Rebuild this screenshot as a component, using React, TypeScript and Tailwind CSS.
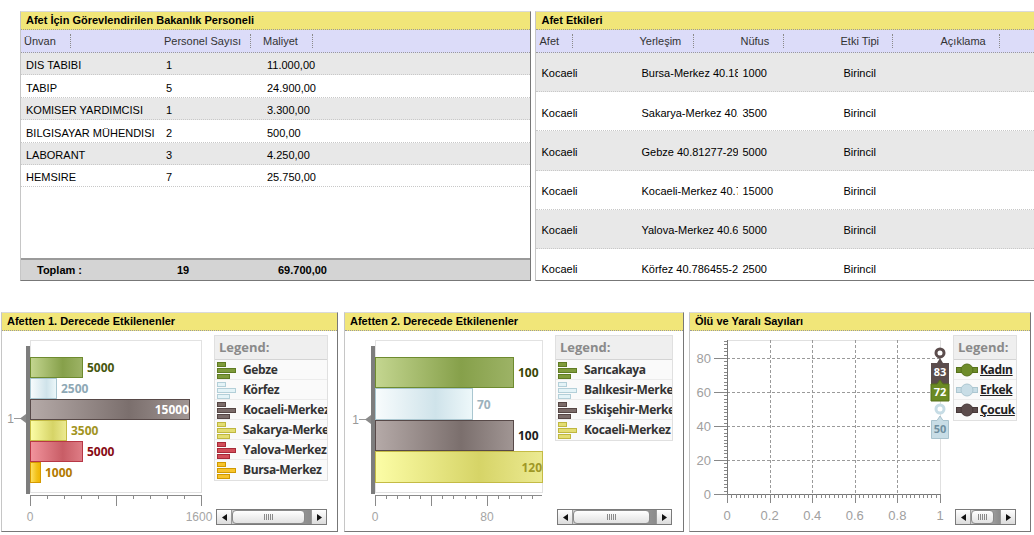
import React from 'react';

type Bar = {
  y: number;
  h: number;
  w: number;
  grad: string;
  stroke: string;
  label: string;
  color: string;
  inside?: boolean;
};

const GRADS: Record<string, string[]> = {
  green: ['#c4d690', '#86a04a', '#9db366'],
  blue: ['#f8fcfd', '#cfe3ea', '#eef8fa'],
  brown: ['#b5aaa8', '#7b6f6d', '#a19694'],
  yellow: ['#fcfda6', '#d6d467', '#ecea92'],
  red: ['#f2949d', '#c85d66', '#df7d86'],
  orange: ['#ffe264', '#f2c11a', '#efb400'],
};

const LEGEND_COLORS: Record<string, [string, string]> = {
  green: ['#7f9b3c', '#5f7b22'],
  blue: ['#e4f3f7', '#b3cfd8'],
  brown: ['#7b6c6a', '#554644'],
  yellow: ['#e3dd72', '#bfb73f'],
  red: ['#d24e5a', '#a72a37'],
  orange: ['#f7c42c', '#d09a00'],
};

function GradDefs({ prefix }: { prefix: string }) {
  return (
    <defs>
      {Object.entries(GRADS).map(([k, c]) => (
        <linearGradient key={k} id={`${prefix}-${k}`} x1="0" x2="1" y1="0" y2="0">
          <stop offset="0" stopColor={c[0]} />
          <stop offset="0.62" stopColor={c[1]} />
          <stop offset="1" stopColor={c[2]} />
        </linearGradient>
      ))}
    </defs>
  );
}

function TitleBar({ children }: { children: React.ReactNode }) {
  return (
    <div className="h-[18px] shrink-0 flex items-center pl-[5px] bg-[#f1e679] border-b border-dotted border-[#9a9a9a] text-[11px] font-bold text-black whitespace-nowrap">
      {children}
    </div>
  );
}

function HeadCell({ label, gap, className }: { label: string; gap: string; className: string }) {
  return (
    <div className={`flex items-center ${className}`}>
      <span>{label}</span>
      <span className={`inline-block h-[14px] border-l border-dotted border-[#8a8a8a] ${gap}`} />
    </div>
  );
}

const personnel = [
  ['DIS TABIBI', '1', '11.000,00'],
  ['TABIP', '5', '24.900,00'],
  ['KOMISER YARDIMCISI', '1', '3.300,00'],
  ['BILGISAYAR MÜHENDISI', '2', '500,00'],
  ['LABORANT', '3', '4.250,00'],
  ['HEMSIRE', '7', '25.750,00'],
];

function PersonnelTable() {
  return (
    <div className="w-[513px] h-[270px] flex flex-col bg-white border-t border-t-[#dadada] border-l border-l-[#c6c6c6] border-r border-r-[#777] border-b border-b-[#777]">
      <TitleBar>Afet İçin Görevlendirilen Bakanlık Personeli</TitleBar>
      <div className="h-[23px] shrink-0 flex bg-[#dcdcf9] border-b border-dotted border-[#9a9a9a] text-[11px] text-[#333]">
        <HeadCell label="Ünvan" gap="ml-[14px]" className="w-[140px] pl-[3px]" />
        <HeadCell label="Personel Sayısı" gap="ml-[9px]" className="w-[99px] pl-[3px]" />
        <HeadCell label="Maliyet" gap="ml-[14px]" className="pl-[3px]" />
      </div>
      <div className="flex-1 flex flex-col">
        {personnel.map((r, i) => (
          <div
            key={i}
            className={`h-[22.4px] shrink-0 flex items-center pt-[4px] border-b border-dotted border-[#c8c8c8] text-[11px] ${i % 2 === 0 ? 'bg-[#e8e8e8]' : 'bg-white'}`}
          >
            <div className="w-[140px] pl-[5px] whitespace-nowrap overflow-hidden">{r[0]}</div>
            <div className="w-[99px] pl-[5px]">{r[1]}</div>
            <div className="pl-[7px]">{r[2]}</div>
          </div>
        ))}
      </div>
      <div className="h-[22px] shrink-0 flex items-center bg-[#d4d4d4] border-t-2 border-[#9a9a9a] text-[11px] font-bold">
        <div className="w-[140px] pl-[16px]">Toplam :</div>
        <div className="w-[99px] pl-[16px]">19</div>
        <div className="pl-[18px]">69.700,00</div>
      </div>
    </div>
  );
}

const effects = [
  ['Kocaeli', 'Bursa-Merkez 40.1826-29.0665', '1000', 'Birincil'],
  ['Kocaeli', 'Sakarya-Merkez 40.7569-30.378', '3500', 'Birincil'],
  ['Kocaeli', 'Gebze 40.81277-29.43061', '5000', 'Birincil'],
  ['Kocaeli', 'Kocaeli-Merkez 40.7654-29.9408', '15000', 'Birincil'],
  ['Kocaeli', 'Yalova-Merkez 40.6550-29.2769', '5000', 'Birincil'],
  ['Kocaeli', 'Körfez 40.786455-29.73817', '2500', 'Birincil'],
];

function EffectsTable() {
  return (
    <div className="w-[500px] h-[270px] flex flex-col bg-white border-t border-t-[#dadada] border-l border-l-[#c6c6c6] border-b border-b-[#777] overflow-hidden">
      <TitleBar>Afet Etkileri</TitleBar>
      <div className="h-[23px] shrink-0 flex bg-[#dcdcf9] border-b border-dotted border-[#9a9a9a] text-[11px] text-[#333]">
        <HeadCell label="Afet" gap="ml-[13px]" className="w-[100px] pl-[3px]" />
        <HeadCell label="Yerleşim" gap="ml-[12px]" className="w-[103px] pl-[3px]" />
        <HeadCell label="Nüfus" gap="ml-[14px]" className="w-[99px] pl-[1px]" />
        <HeadCell label="Etki Tipi" gap="ml-[13px]" className="w-[100px] pl-[2px]" />
        <HeadCell label="Açıklama" gap="ml-[13px]" className="pl-[2px]" />
      </div>
      <div className="flex-1 flex flex-col overflow-hidden">
        {effects.map((r, i) => (
          <div
            key={i}
            className={`h-[39.2px] shrink-0 flex items-center pt-[3px] border-b border-dotted border-[#c8c8c8] text-[11px] ${i % 2 === 0 ? 'bg-[#e8e8e8]' : 'bg-white'}`}
          >
            <div className="w-[100px] pl-[5px]">{r[0]}</div>
            <div className="w-[102px] pl-[5px] whitespace-nowrap overflow-hidden">{r[1]}</div>
            <div className="w-[100px] pl-[4px]">{r[2]}</div>
            <div className="w-[100px] pl-[5px]">{r[3]}</div>
            <div className="flex-1" />
          </div>
        ))}
      </div>
    </div>
  );
}

function Scrollbar({ className }: { className: string }) {
  return (
    <div className={`flex h-[16px] border border-[#7a7a7a] bg-[#e4e4e4] ${className}`}>
      <div className="w-[15px] shrink-0 flex items-center justify-center bg-[linear-gradient(#ffffff,#dcdcdc)] border-r border-[#9a9a9a]">
        <svg width="5" height="7" viewBox="0 0 5 7">
          <polygon points="5,0 0,3.5 5,7" fill="#111" />
        </svg>
      </div>
      <div className="flex-1 flex bg-[linear-gradient(to_right,#d0d0d0,#8c8c8c)]">
        <div className="flex-1 mr-[6px] flex items-center justify-center gap-[1px] rounded-[4px] border border-[#8a8a8a] bg-[linear-gradient(#ffffff,#e2e2e2)]">
          {[0, 1, 2, 3, 4].map((i) => (
            <span key={i} className="w-[1px] h-[6px] bg-[#8a8a8a]" />
          ))}
        </div>
      </div>
      <div className="w-[15px] shrink-0 flex items-center justify-center bg-[linear-gradient(#ffffff,#dcdcdc)] border-l border-[#9a9a9a]">
        <svg width="5" height="7" viewBox="0 0 5 7">
          <polygon points="0,0 5,3.5 0,7" fill="#111" />
        </svg>
      </div>
    </div>
  );
}

function BarIcon({ color }: { color: string }) {
  const [f, s] = LEGEND_COLORS[color];
  return (
    <svg width="19" height="18" viewBox="0 0 19 18" className="shrink-0">
      <rect x="0.5" y="1.5" width="8" height="4" fill={f} stroke={s} />
      <rect x="0.5" y="7.5" width="18" height="4" fill={f} stroke={s} />
      <rect x="0.5" y="13.5" width="12" height="4" fill={f} stroke={s} />
    </svg>
  );
}

function LineIcon({ fill, stroke }: { fill: string; stroke: string }) {
  return (
    <svg width="22" height="14" viewBox="0 0 22 14" className="shrink-0">
      <rect x="0.5" y="4.5" width="21" height="5" fill={fill} stroke={stroke} />
      <circle cx="11" cy="7" r="6" fill={fill} stroke={stroke} />
    </svg>
  );
}

function Legend({ className, children }: { className: string; children: React.ReactNode }) {
  return (
    <div className={`flex flex-col border border-[#e0e0e0] bg-[#fafafa] font-['Open_Sans',sans-serif] ${className}`}>
      <div className="h-[24px] flex items-center pl-[4px] bg-[#efefef] border-b border-[#d4d4d4] text-[13px] font-bold text-[#8a8a8a]">
        Legend:
      </div>
      {children}
    </div>
  );
}

function LegendItem({ color, label }: { color: string; label: string }) {
  return (
    <div className="h-[20px] flex items-center gap-[7px] pl-[2px] border-b border-[#ececec] last:border-b-0 overflow-hidden">
      <BarIcon color={color} />
      <span className="text-[12px] font-bold tracking-[-0.35px] text-[#333] whitespace-nowrap">{label}</span>
    </div>
  );
}

type ChartProps = {
  prefix: string;
  vx: number;
  vw: number;
  plotX: number;
  plotW: number;
  bars: Bar[];
  tickStep: number;
  tickCount: number;
  majorEvery: number;
  xLabels: { x: number; t: string }[];
  pointerY: number;
};

function BarChart(p: ChartProps) {
  const ticks = Array.from({ length: p.tickCount }, (_, i) => i);
  return (
    <svg width={p.vw} height={199} viewBox={`${p.vx} 331 ${p.vw} 199`} className="shrink-0">
      <GradDefs prefix={p.prefix} />
      <rect x={p.plotX + 0.5} y={340.5} width={p.plotW} height={152} fill="#fff" stroke="#e2e2e2" />
      {p.bars.map((b, i) => (
        <g key={i}>
          <rect
            x={p.plotX + 0.5}
            y={b.y + 0.5}
            width={b.w - 1}
            height={b.h - 1}
            fill={`url(#${p.prefix}-${b.grad})`}
            stroke={b.stroke}
          />
          <text
            x={b.inside ? p.plotX + b.w - 1 : p.plotX + b.w + 4}
            y={b.y + b.h / 2 + 4.5}
            textAnchor={b.inside ? 'end' : 'start'}
            fontSize="12"
            fontWeight="bold"
            fontFamily="Open Sans, sans-serif"
            fill={b.color}
          >
            {b.label}
          </text>
        </g>
      ))}
      <rect x={p.plotX - 4} y={346} width={4} height={148} fill="#7d7d7d" />
      <line x1={p.plotX - 16} x2={p.plotX - 9} y1={p.pointerY + 0.5} y2={p.pointerY + 0.5} stroke="#999" />
      <polygon
        points={`${p.plotX - 10},${p.pointerY + 0.5} ${p.plotX - 4},${p.pointerY - 4} ${p.plotX - 4},${p.pointerY + 5}`}
        fill="#8a8a8a"
      />
      <text x={p.plotX - 16} y={p.pointerY + 5} textAnchor="end" fontSize="12" fill="#999" fontFamily="Liberation Sans, sans-serif">
        1
      </text>
      <line x1={p.plotX} x2={p.plotX + p.plotW} y1={495.5} y2={495.5} stroke="#8a8a8a" />
      {ticks.map((i) => {
        const x = Math.round(p.plotX + i * p.tickStep) + 0.5;
        const major = i % p.majorEvery === 0;
        return <line key={i} x1={x} x2={x} y1={495} y2={major ? 506 : 499} stroke="#8a8a8a" />;
      })}
      {p.xLabels.map((l, i) => (
        <text key={i} x={l.x} y={521} textAnchor="middle" fontSize="12" fill="#a5a5a5" fontFamily="Liberation Sans, sans-serif">
          {l.t}
        </text>
      ))}
    </svg>
  );
}

const bars1: Bar[] = [
  { y: 357, h: 21, w: 53, grad: 'green', stroke: '#6e8b2f', label: '5000', color: '#48570f' },
  { y: 378, h: 21, w: 27, grad: 'blue', stroke: '#a9c6d0', label: '2500', color: '#8ea8b5' },
  { y: 399, h: 21, w: 160, grad: 'brown', stroke: '#574948', label: '15000', color: '#ffffff', inside: true },
  { y: 420, h: 21, w: 37, grad: 'yellow', stroke: '#c4bb45', label: '3500', color: '#a2941f' },
  { y: 441, h: 21, w: 53, grad: 'red', stroke: '#b73746', label: '5000', color: '#880c15' },
  { y: 462, h: 21, w: 11, grad: 'orange', stroke: '#d59a00', label: '1000', color: '#b27a00' },
];

const bars2: Bar[] = [
  { y: 357, h: 31, w: 139, grad: 'green', stroke: '#6e8b2f', label: '100', color: '#3a4705' },
  { y: 388, h: 32, w: 98, grad: 'blue', stroke: '#a9c6d0', label: '70', color: '#9cb1bc' },
  { y: 420, h: 31, w: 139, grad: 'brown', stroke: '#574948', label: '100', color: '#1e1e1e' },
  { y: 451, h: 32, w: 168, grad: 'yellow', stroke: '#c4bb45', label: '120', color: '#9f9826', inside: true },
];

function Panel({ className, title, children }: { className: string; title: string; children: React.ReactNode }) {
  return (
    <div className={`h-[220px] flex flex-col bg-white border-t border-t-[#dadada] border-l border-l-[#c6c6c6] border-r border-r-[#777] border-b border-b-[#777] ${className}`}>
      <TitleBar>{title}</TitleBar>
      <div className="flex-1 flex">{children}</div>
    </div>
  );
}

function LineChart() {
  const yOf = (v: number) => 494 - v * 1.7;
  const xOf = (v: number) => 727 + v * 213;
  const minorY = Array.from({ length: 46 }, (_, i) => i * 2);
  const minorX = Array.from({ length: 51 }, (_, i) => i / 50);
  return (
    <svg width={263} height={199} viewBox="690 331 263 199" className="shrink-0">
      <line x1={727} x2={940.5} y1={340.5} y2={340.5} stroke="#e0e0e0" />
      <line x1={940.5} x2={940.5} y1={340} y2={494} stroke="#e0e0e0" />
      {[20, 40, 60, 80].map((v) => (
        <line key={v} x1={727} x2={940} y1={Math.round(yOf(v)) + 0.5} y2={Math.round(yOf(v)) + 0.5} stroke="#9a9a9a" strokeDasharray="3 2" />
      ))}
      {[0.2, 0.4, 0.6, 0.8].map((v) => (
        <line key={v} x1={Math.round(xOf(v)) + 0.5} x2={Math.round(xOf(v)) + 0.5} y1={340} y2={494} stroke="#9a9a9a" strokeDasharray="3 2" />
      ))}
      <line x1={727.5} x2={727.5} y1={340} y2={495} stroke="#777" />
      {minorY.map((v) => {
        const y = Math.round(yOf(v)) + 0.5;
        const major = v % 20 === 0;
        return <line key={v} x1={major ? 714 : 724} x2={727} y1={y} y2={y} stroke="#888" />;
      })}
      <line x1={727} x2={941} y1={494.5} y2={494.5} stroke="#777" />
      {minorX.map((v, i) => {
        const x = Math.round(xOf(v)) + 0.5;
        const major = i % 10 === 0;
        return <line key={i} x1={x} x2={x} y1={494} y2={major ? 503 : 498} stroke="#888" />;
      })}
      {[0, 20, 40, 60, 80].map((v) => (
        <text key={v} x={711} y={yOf(v) + 5} textAnchor="end" fontSize="13" fill="#a0a0a0" fontFamily="Liberation Sans, sans-serif">
          {v}
        </text>
      ))}
      {['0', '0.2', '0.4', '0.6', '0.8', '1'].map((t, i) => (
        <text key={t} x={xOf(i * 0.2)} y={520} textAnchor="middle" fontSize="13" fill="#a0a0a0" fontFamily="Liberation Sans, sans-serif">
          {t}
        </text>
      ))}
      <circle cx={940} cy={yOf(72)} r={4} fill="#fff" stroke="#6b8a23" strokeWidth={3} />
      <circle cx={940} cy={yOf(83)} r={4} fill="#fff" stroke="#5b4c4c" strokeWidth={3} />
      <polygon points="931,363 937,363 940,358 943,363 949,363 949,385 931,385" fill="#5b4c4c" />
      <text x={940} y={376} textAnchor="middle" fontSize="11" fontWeight="bold" fill="#fff" fontFamily="Open Sans, sans-serif">
        83
      </text>
      <polygon points="931,384 937,384 940,380 943,384 949,384 949,401 931,401" fill="#6b8a23" stroke="#56711a" />
      <text x={940} y={396} textAnchor="middle" fontSize="11" fontWeight="bold" fill="#fff" fontFamily="Open Sans, sans-serif">
        72
      </text>
      <circle cx={940} cy={yOf(50)} r={4} fill="#fff" stroke="#c6dce5" strokeWidth={3} />
      <polygon points="931.5,420.5 937,420.5 940,416 943,420.5 948.5,420.5 948.5,438.5 931.5,438.5" fill="#c8dde6" stroke="#a9c3ce" />
      <text x={940} y={433} textAnchor="middle" fontSize="11" fontWeight="bold" fill="#6f8fa0" fontFamily="Open Sans, sans-serif">
        50
      </text>
    </svg>
  );
}

function LineLegendItem({ label, fill, stroke }: { label: string; fill: string; stroke: string }) {
  return (
    <div className="h-[20px] flex items-center gap-[2px] pl-[2px] border-b border-[#ececec] last:border-b-0 overflow-hidden">
      <LineIcon fill={fill} stroke={stroke} />
      <span className="text-[12px] font-bold tracking-[-0.35px] text-[#222] underline whitespace-nowrap">{label}</span>
    </div>
  );
}

export default function App() {
  return (
    <div className="w-[1034px] h-[535px] overflow-hidden bg-white font-['Liberation_Sans',Arial,sans-serif] text-black">
      <div className="flex items-start pt-[11px] pl-[20px] gap-[4px]">
        <PersonnelTable />
        <EffectsTable />
      </div>
      <div className="flex items-start mt-[31px] pl-[1px]">
        <Panel className="w-[337px]" title="Afetten 1. Derecede Etkilenenler">
          <BarChart
            prefix="c1"
            vx={2}
            vw={212}
            plotX={30}
            plotW={171}
            bars={bars1}
            tickStep={17.1}
            tickCount={11}
            majorEvery={5}
            xLabels={[
              { x: 30, t: '0' },
              { x: 199, t: '1600' },
            ]}
            pointerY={418}
          />
          <div className="flex flex-col pt-[4px]">
            <Legend className="w-[114px]">
              <LegendItem color="green" label="Gebze" />
              <LegendItem color="blue" label="Körfez" />
              <LegendItem color="brown" label="Kocaeli-Merkez" />
              <LegendItem color="yellow" label="Sakarya-Merkez" />
              <LegendItem color="red" label="Yalova-Merkez" />
              <LegendItem color="orange" label="Bursa-Merkez" />
            </Legend>
            <Scrollbar className="w-[111px] ml-[2px] mt-[28px]" />
          </div>
        </Panel>
        <Panel className="w-[340px] ml-[6px]" title="Afetten 2. Derecede Etkilenenler">
          <BarChart
            prefix="c2"
            vx={345}
            vw={210}
            plotX={375}
            plotW={167}
            bars={bars2}
            tickStep={11.2}
            tickCount={15}
            majorEvery={5}
            xLabels={[
              { x: 375, t: '0' },
              { x: 487, t: '80' },
            ]}
            pointerY={419}
          />
          <div className="flex flex-col pt-[4px]">
            <Legend className="w-[118px]">
              <LegendItem color="green" label="Sarıcakaya" />
              <LegendItem color="blue" label="Balıkesir-Merkez" />
              <LegendItem color="brown" label="Eskişehir-Merkez" />
              <LegendItem color="yellow" label="Kocaeli-Merkez" />
            </Legend>
            <Scrollbar className="w-[115px] ml-[2px] mt-[68px]" />
          </div>
        </Panel>
        <Panel className="w-[342px] ml-[5px]" title="Ölü ve Yaralı Sayıları">
          <LineChart />
          <div className="flex flex-col pt-[4px]">
            <Legend className="w-[64px]">
              <LineLegendItem label="Kadın" fill="#6e8c2a" stroke="#56711a" />
              <LineLegendItem label="Erkek" fill="#c8dde6" stroke="#adc7d1" />
              <LineLegendItem label="Çocuk" fill="#5b4b4b" stroke="#463838" />
            </Legend>
            <Scrollbar className="w-[61px] ml-[2px] mt-[88px]" />
          </div>
        </Panel>
      </div>
    </div>
  );
}
